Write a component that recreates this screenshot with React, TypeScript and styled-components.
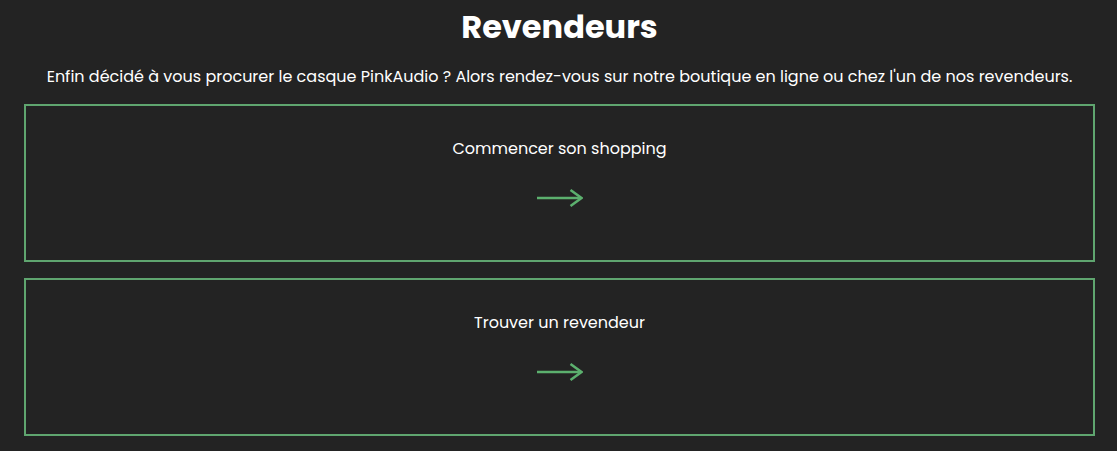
import React from "react";
import styled, { createGlobalStyle } from "styled-components";

const Global = createGlobalStyle`
  html, body { margin: 0; padding: 0; background: #232323; }
  body { font-family: "Poppins", "Inter", "Noto Sans", sans-serif; color: #ffffff; }
`;

const Page = styled.main`
  display: flex;
  flex-direction: column;
  align-items: stretch;
  padding: 3px 22px 0 24px;
  min-height: 451px;
  box-sizing: border-box;
`;

const Title = styled.h1`
  margin: 0;
  text-align: center;
  font-size: 32px;
  line-height: 48px;
  font-weight: 700;
`;

const Lead = styled.p`
  margin: 14px 0 15px;
  text-align: center;
  font-size: 16px;
  line-height: 24px;
  font-weight: 400;
`;

const Cards = styled.div`
  display: flex;
  flex-direction: column;
  gap: 16px;
`;

const Card = styled.a`
  display: flex;
  flex-direction: column;
  align-items: center;
  box-sizing: border-box;
  height: 158px;
  padding-top: 31px;
  border: 2px solid #5fa56f;
  color: #ffffff;
  text-decoration: none;
`;

const CardLabel = styled.span`
  font-size: 16px;
  line-height: 24px;
`;

const ArrowWrap = styled.span`
  margin-top: 28px;
  display: flex;
  color: #5cb06e;
`;

const Arrow = () => (
  <svg width="46" height="18" viewBox="0 0 46 18" fill="none">
    <path d="M0 9H44" stroke="currentColor" strokeWidth="2.5" />
    <path d="M33.5 1L44.5 9L33.5 17" stroke="currentColor" strokeWidth="2.5" strokeLinejoin="miter" />
  </svg>
);

export default function App() {
  return (
    <>
      <Global />
      <Page>
        <Title>Revendeurs</Title>
        <Lead>
          Enfin décidé à vous procurer le casque PinkAudio ? Alors rendez-vous sur notre boutique en ligne ou chez l'un de nos revendeurs.
        </Lead>
        <Cards>
          {["Commencer son shopping", "Trouver un revendeur"].map((t) => (
            <Card key={t} href="#">
              <CardLabel>{t}</CardLabel>
              <ArrowWrap>
                <Arrow />
              </ArrowWrap>
            </Card>
          ))}
        </Cards>
      </Page>
    </>
  );
}
